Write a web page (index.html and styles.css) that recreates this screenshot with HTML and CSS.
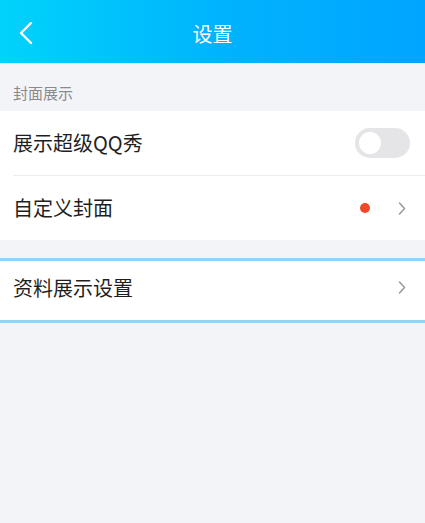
FILE: index.html
```html
<!DOCTYPE html>
<html lang="zh">
<head>
<meta charset="utf-8">
<title>设置</title>
<link rel="stylesheet" href="styles.css">
</head>
<body>
<header class="topbar">
  <svg class="back" width="14" height="22" viewBox="0 0 14 22"><path d="M12 1 L2 11 L12 21" fill="none" stroke="#fff" stroke-width="2.4" stroke-linecap="round" stroke-linejoin="round"/></svg>
  <h1 class="title">设置</h1>
</header>
<div class="section-label">封面展示</div>
<div class="group">
  <div class="row">
    <span class="row-text">展示超级QQ秀</span>
    <span class="toggle"><span class="knob"></span></span>
  </div>
  <div class="divider"></div>
  <div class="row">
    <span class="row-text">自定义封面</span>
    <span class="row-right">
      <span class="dot"></span>
      <svg class="chev" width="8" height="13" viewBox="0 0 8 13"><path d="M1.5 1 L6.5 6.5 L1.5 12" fill="none" stroke="#999" stroke-width="1.5" stroke-linecap="round" stroke-linejoin="round"/></svg>
    </span>
  </div>
</div>
<div class="group focused">
  <div class="row short">
    <span class="row-text">资料展示设置</span>
    <svg class="chev" width="8" height="13" viewBox="0 0 8 13"><path d="M1.5 1 L6.5 6.5 L1.5 12" fill="none" stroke="#999" stroke-width="1.5" stroke-linecap="round" stroke-linejoin="round"/></svg>
  </div>
</div>
</body>
</html>
```
FILE: styles.css
```css
html, body {
  margin: 0;
  padding: 0;
  background: #f3f4f8;
  font-family: "Noto Sans CJK SC", "Noto Sans", sans-serif;
  height: 100%;
}
.topbar {
  height: 63px;
  background: linear-gradient(90deg, #00d3fb 0%, #00b4fd 50%, #00a5ff 100%);
  display: flex;
  align-items: center;
  justify-content: center;
  position: relative;
}
.back {
  position: absolute;
  left: 19px;
  top: 22px;
}
.title {
  margin: 0;
  font-size: 20px;
  font-weight: 400;
  color: #fff;
  line-height: 1;
  padding-top: 5px;
}
.section-label {
  height: 48px;
  box-sizing: border-box;
  padding: 20px 0 0 13px;
  font-size: 15px;
  line-height: 20px;
  color: #8a8a8e;
}
.group {
  background: #fff;
}
.row {
  height: 64px;
  display: flex;
  align-items: center;
  justify-content: space-between;
  padding: 0 19px 0 13px;
}
.row-text {
  font-size: 20px;
  color: #1f1f1f;
  line-height: 1;
}
.divider {
  height: 1px;
  background: #ececee;
  margin-left: 13px;
}
.toggle {
  width: 55px;
  height: 30px;
  border-radius: 15px;
  background: #e5e5e7;
  display: flex;
  align-items: center;
  padding-left: 4px;
  box-sizing: border-box;
  margin-right: -4px;
}
.knob {
  width: 22px;
  height: 22px;
  border-radius: 50%;
  background: #fff;
}
.row-right {
  display: flex;
  align-items: center;
  gap: 28px;
}
.dot {
  width: 10px;
  height: 10px;
  border-radius: 50%;
  background: #f2472b;
}
.chev {
  display: block;
}
.focused {
  margin-top: 18px;
  border-top: 3px solid #8dd4f8;
  border-bottom: 3px solid #8dd4f8;
}
.focused .row {
  padding-bottom: 6px;
  box-sizing: border-box;
  height: 59px;
}
```
